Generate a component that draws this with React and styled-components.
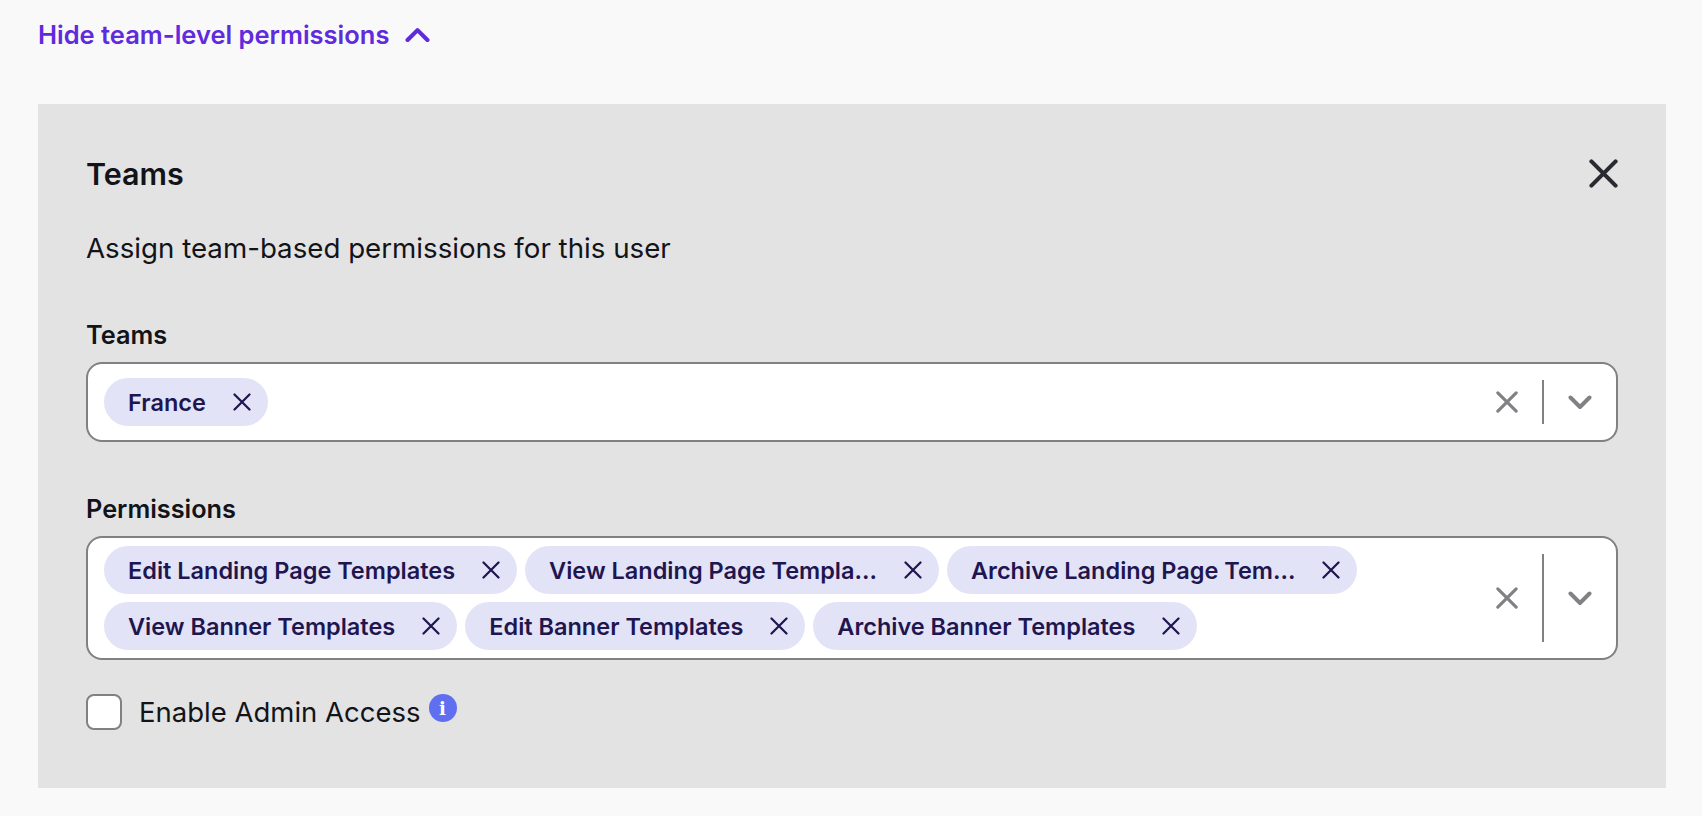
import styled, { createGlobalStyle } from "styled-components";

const teams = ["France"];
const permissions = [
  "Edit Landing Page Templates",
  "View Landing Page Templa...",
  "Archive Landing Page Tem...",
  "View Banner Templates",
  "Edit Banner Templates",
  "Archive Banner Templates",
];

const CrossIcon = ({ size, weight = 2 }) => (
  <svg width={size} height={size} viewBox="0 0 24 24" fill="none" stroke="currentColor" strokeWidth={weight} strokeLinecap="round">
    <path d="M2 2L22 22M22 2L2 22" />
  </svg>
);

const ChevronIcon = ({ up, width }) => (
  <svg width={width} height={width * 0.625} viewBox="0 0 24 15" fill="none" stroke="currentColor" strokeWidth="4" strokeLinecap="round" strokeLinejoin="round">
    <path d={up ? "M2.5 12.5L12 3L21.5 12.5" : "M2.5 2.5L12 12L21.5 2.5"} />
  </svg>
);

const MultiSelect = ({ label, values }) => (
  <FieldGroup>
    <FieldLabel>{label}</FieldLabel>
    <SelectBox>
      <ChipList>
        {values.map((value) => (
          <Chip key={value}>
            <span>{value}</span>
            <ChipRemove><CrossIcon size={18} weight={3} /></ChipRemove>
          </Chip>
        ))}
      </ChipList>
      <Indicators>
        <ClearButton><CrossIcon size={22} weight={3.4} /></ClearButton>
        <Divider />
        <DropButton><ChevronIcon width={24} /></DropButton>
      </Indicators>
    </SelectBox>
  </FieldGroup>
);

const App = () => (
  <Page>
    <GlobalStyle />
    <ToggleLink>
      Hide team-level permissions
      <ChevronIcon up width={25} />
    </ToggleLink>
    <Panel>
      <PanelHeader>
        <PanelTitle>Teams</PanelTitle>
        <CloseButton><CrossIcon size={29} weight={3.4} /></CloseButton>
      </PanelHeader>
      <Description>Assign team-based permissions for this user</Description>
      <MultiSelect label="Teams" values={teams} />
      <MultiSelect label="Permissions" values={permissions} />
      <CheckRow>
        <CheckBox />
        <CheckLabel>Enable Admin Access</CheckLabel>
        <InfoBadge>i</InfoBadge>
      </CheckRow>
    </Panel>
  </Page>
);

export default App;

const GlobalStyle = createGlobalStyle`
  html, body {
    margin: 0;
    background: #f9f9f9;
  }
  body {
    font-family: "Inter", "Liberation Sans", sans-serif;
    color: #13131a;
  }
`;

const Page = styled.div`
  height: 816px;
  padding: 0 36px 0 38px;
  box-sizing: border-box;
  overflow: hidden;
`;

const ToggleLink = styled.button`
  display: flex;
  align-items: center;
  gap: 16px;
  height: 69px;
  padding: 0;
  margin-bottom: 35px;
  border: 0;
  background: none;
  font: 600 25.5px "Inter", sans-serif;
  color: #5f2bdc;
`;

const Panel = styled.section`
  height: 684px;
  padding: 47px 48px 48px;
  box-sizing: border-box;
  background: #e3e3e3;
`;

const PanelHeader = styled.div`
  display: flex;
  justify-content: space-between;
  align-items: center;
  height: 44px;
`;

const PanelTitle = styled.h2`
  margin: 0;
  font-size: 30.5px;
  font-weight: 600;
`;

const CloseButton = styled.span`
  display: flex;
  color: #2a2b30;
`;

const Description = styled.p`
  margin: 33px 0 0;
  font-size: 27.7px;
  line-height: 40px;
`;

const FieldGroup = styled.div`
  margin-top: 51px;
`;

const FieldLabel = styled.div`
  font-size: 25.3px;
  font-weight: 600;
  line-height: 32px;
  margin-bottom: 11px;
`;

const SelectBox = styled.div`
  display: flex;
  align-items: stretch;
  min-height: 80px;
  padding: 8px 0 8px 16px;
  box-sizing: border-box;
  background: #fff;
  border: 2px solid #808085;
  border-radius: 16px;
`;

const ChipList = styled.div`
  flex: 1;
  display: flex;
  flex-wrap: wrap;
  align-items: center;
  align-content: center;
  gap: 8px;
`;

const Chip = styled.div`
  display: flex;
  align-items: center;
  gap: 27px;
  height: 48px;
  padding: 0 17px 0 24px;
  border-radius: 24px;
  background: #e3e3f7;
  color: #1f1650;
  font-size: 23.5px;
  font-weight: 600;
  white-space: nowrap;
`;

const ChipRemove = styled.span`
  display: flex;
  color: #1f1650;
`;

const Indicators = styled.div`
  display: flex;
  align-items: center;
  color: #808085;
`;

const ClearButton = styled.span`
  display: flex;
  margin-right: 24px;
`;

const Divider = styled.span`
  align-self: stretch;
  width: 2px;
  margin: 8px 0;
  background: #808085;
`;

const DropButton = styled.span`
  display: flex;
  margin: 0 24px;
`;

const CheckRow = styled.div`
  display: flex;
  align-items: center;
  margin-top: 34px;
`;

const CheckBox = styled.span`
  width: 36px;
  height: 36px;
  box-sizing: border-box;
  background: #fff;
  border: 2px solid #808085;
  border-radius: 8px;
`;

const CheckLabel = styled.span`
  margin-left: 17px;
  font-size: 27.5px;
  line-height: 36px;
`;

const InfoBadge = styled.span`
  align-self: flex-start;
  display: flex;
  align-items: center;
  justify-content: center;
  width: 28px;
  height: 28px;
  margin-left: 8px;
  border-radius: 50%;
  background: #5f6ff0;
  color: #fff;
  font: 700 18px "DejaVu Serif", serif;
`;
